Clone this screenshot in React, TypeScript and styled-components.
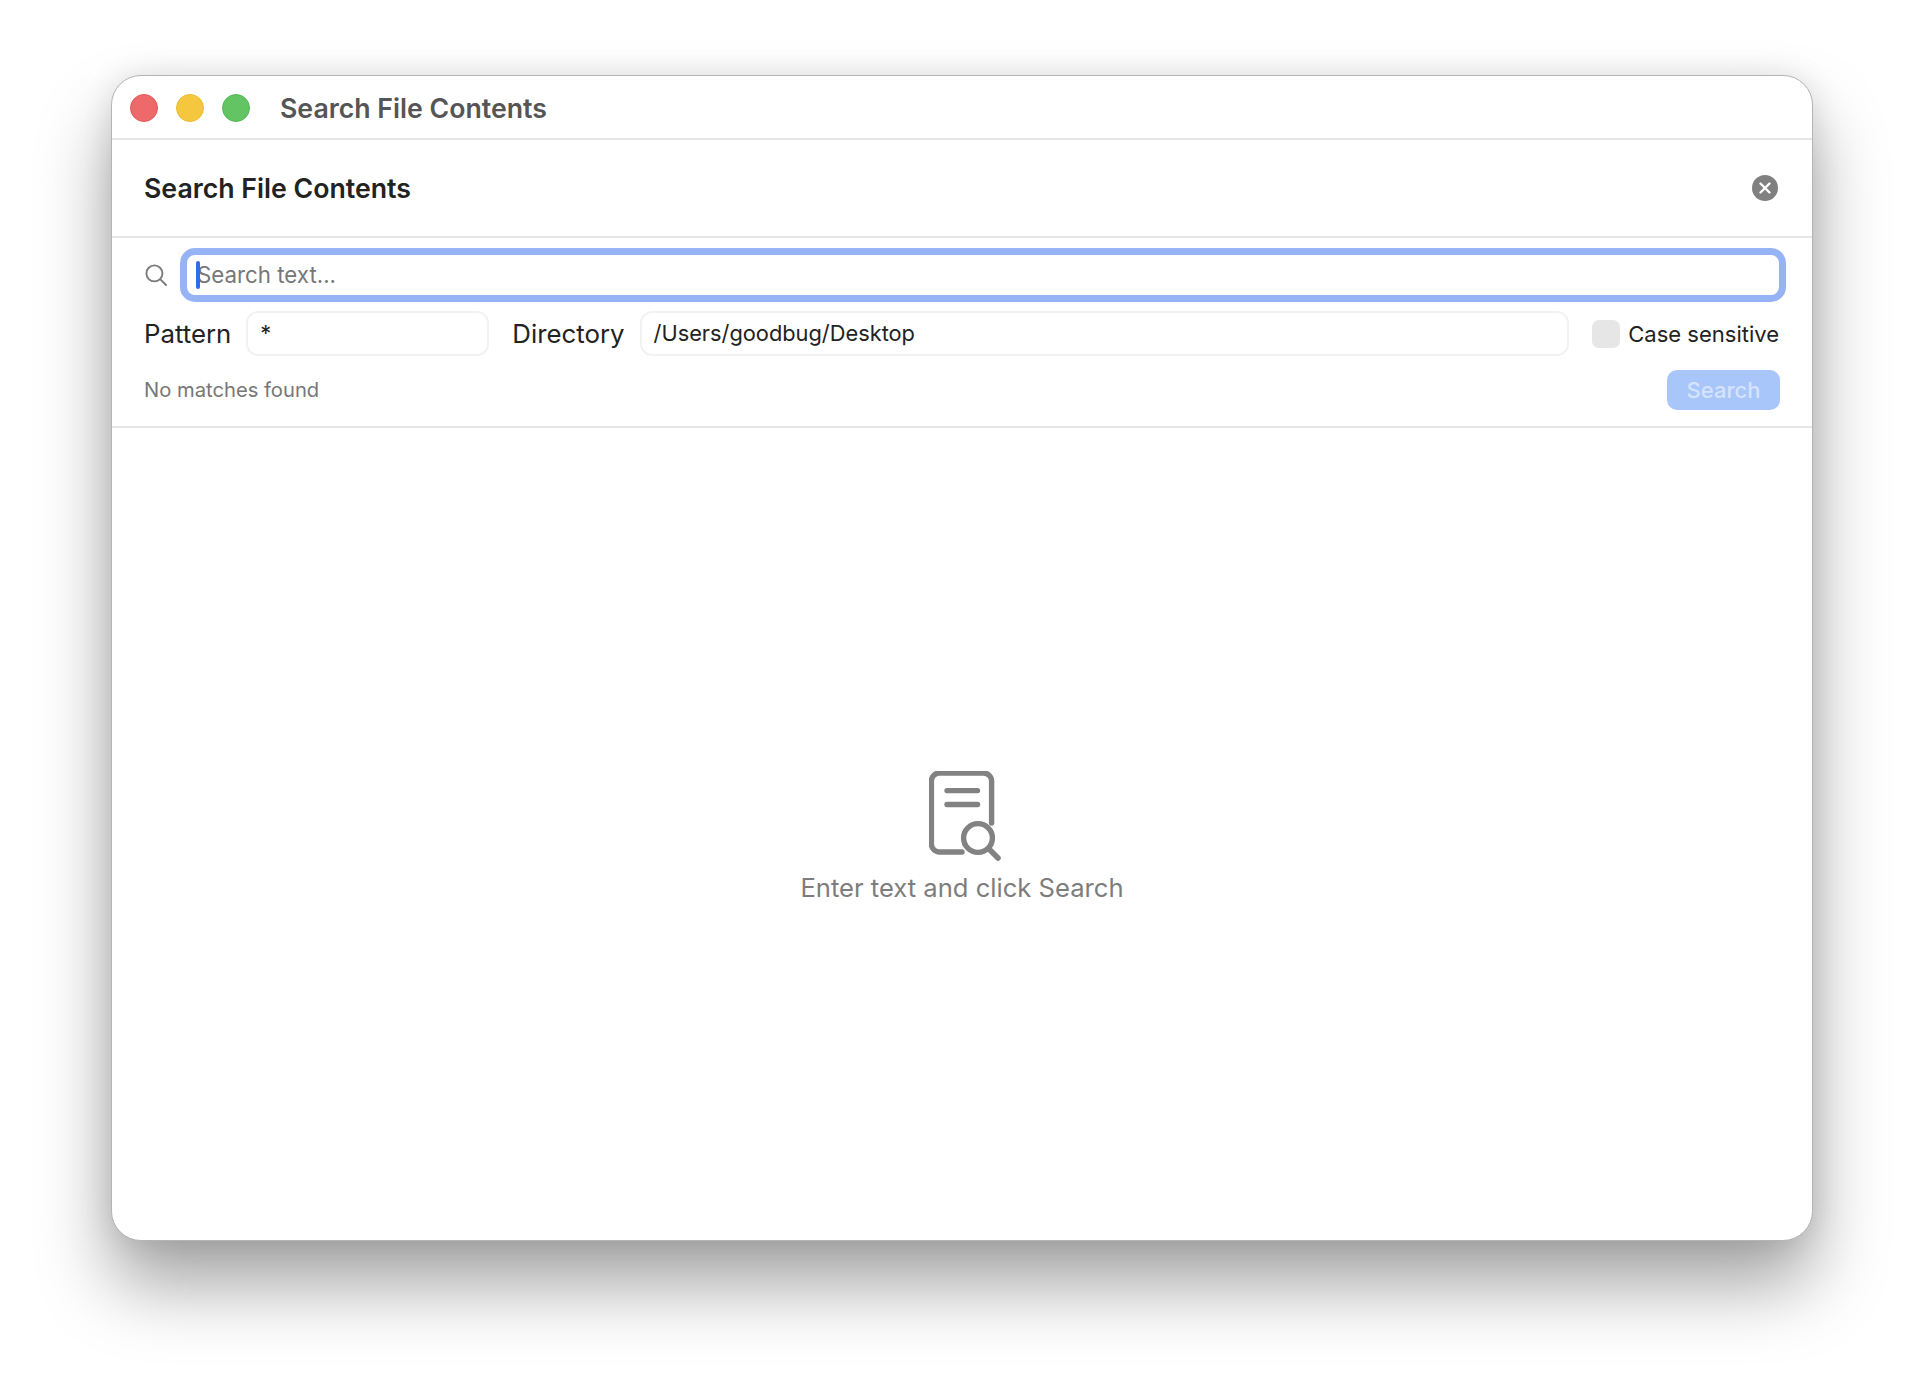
import React from 'react';
import styled, { createGlobalStyle } from 'styled-components';

const GlobalStyle = createGlobalStyle`
  html, body {
    margin: 0;
    background: #fff;
  }

  body {
    font-family: Inter, "Liberation Sans", sans-serif;
    color: #222;
  }
`;

const Page = styled.div`
  width: 1924px;
  height: 1388px;
  box-sizing: border-box;
  padding: 75px 0 0 111px;
  overflow: hidden;
`;

const Window = styled.div`
  width: 1702px;
  height: 1166px;
  box-sizing: border-box;
  display: flex;
  flex-direction: column;
  background: #fff;
  border: 1px solid #b4b4b4;
  border-radius: 30px;
  box-shadow: 0 44px 72px rgba(0, 0, 0, 0.36), 0 0 30px rgba(0, 0, 0, 0.1);
`;

const TitleBar = styled.div`
  height: 60px;
  flex: none;
  display: flex;
  align-items: center;
  padding: 2px 0 0 18px;
  border-bottom: 2px solid #e6e6e6;
`;

const Light = styled.span<{ $color: string; $edge: string }>`
  width: 28px;
  height: 28px;
  box-sizing: border-box;
  margin-right: 18px;
  border-radius: 50%;
  background: ${(p) => p.$color};
  border: 1px solid ${(p) => p.$edge};
`;

const WindowTitle = styled.div`
  margin-left: 12px;
  font-size: 26.7px;
  font-weight: 600;
  color: #555;
`;

const Header = styled.div`
  height: 96px;
  flex: none;
  display: flex;
  align-items: center;
  justify-content: space-between;
  padding: 0 34px 0 32px;
  border-bottom: 2px solid #e6e6e6;
`;

const Heading = styled.div`
  font-size: 26.7px;
  font-weight: 600;
  color: #222;
`;

const SearchRow = styled.div`
  display: flex;
  align-items: center;
  gap: 13px;
  margin: 10px 26px 0 33px;
`;

const SearchField = styled.div`
  position: relative;
  flex: 1;
`;

const SearchInput = styled.input`
  display: block;
  width: 100%;
  height: 54px;
  box-sizing: border-box;
  padding: 0 0 2px 10px;
  border: 7px solid #96b3f5;
  border-radius: 15px;
  outline: none;
  font-family: inherit;
  font-size: 22.3px;
  color: #222;

  &::placeholder {
    color: #777;
    opacity: 1;
  }
`;

const Caret = styled.span`
  position: absolute;
  left: 16px;
  top: 13px;
  width: 4px;
  height: 28px;
  border-radius: 2px;
  background: #2f6bed;
`;

const OptionsRow = styled.div`
  display: flex;
  align-items: center;
  margin: 9px 33px 0 32px;
`;

const FieldLabel = styled.label`
  font-size: 25.8px;
  color: #222;
  margin-right: 15px;
`;

const TextInput = styled.input<{ $width?: number }>`
  width: ${(p) => (p.$width ? `${p.$width}px` : 'auto')};
  flex: ${(p) => (p.$width ? 'none' : '1')};
  min-width: 0;
  height: 45px;
  box-sizing: border-box;
  padding: 0 12px 2px;
  border: 2px solid #f2f2f2;
  border-radius: 12px;
  outline: none;
  font-family: inherit;
  font-size: 21.8px;
  color: #222;
  margin-right: 23px;
`;

const CheckLabel = styled.div`
  display: flex;
  flex: none;
  align-items: center;
  gap: 8px;
  font-size: 22px;
  color: #222;
`;

const CheckBox = styled.span`
  width: 28px;
  height: 28px;
  flex: none;
  border-radius: 7px;
  background: #e6e6e6;
`;

const StatusRow = styled.div`
  height: 72px;
  flex: none;
  box-sizing: border-box;
  display: flex;
  align-items: center;
  justify-content: space-between;
  padding: 0 32px 3px;
  border-bottom: 2px solid #e6e6e6;
`;

const StatusText = styled.div`
  font-size: 20.2px;
  color: #777;
`;

const SearchButton = styled.button`
  width: 113px;
  height: 40px;
  border: 0;
  border-radius: 10px;
  background: #a9c6fa;
  color: #d6e3fd;
  font-family: inherit;
  font-size: 22px;
  font-weight: 500;
`;

const EmptyState = styled.div`
  flex: 1;
  display: flex;
  flex-direction: column;
  align-items: center;
  padding-top: 343px;
  box-sizing: border-box;
`;

const EmptyText = styled.div`
  margin-top: 11px;
  font-size: 25.6px;
  color: #7d7d7d;
`;

const DocIconWrap = styled.div`
  display: flex;
  margin-left: 5px;
`;

function SearchIcon() {
  return (
    <svg width="22" height="22" viewBox="0 0 22 22" fill="none" stroke="#7c7c7c" strokeWidth="1.9" strokeLinecap="round">
      <circle cx="9.4" cy="9.4" r="8" />
      <path d="M15.4 15.4 21 21" />
    </svg>
  );
}

function CloseIcon() {
  return (
    <svg width="26" height="26" viewBox="0 0 26 26">
      <circle cx="13" cy="13" r="13" fill="#808080" />
      <path d="M8.5 8.5l9 9M17.5 8.5l-9 9" stroke="#fff" strokeWidth="2.4" strokeLinecap="round" />
    </svg>
  );
}

function DocSearchIcon() {
  return (
    <svg width="72" height="90" viewBox="0 0 72 90" fill="none" stroke="#828282" strokeWidth="5.4" strokeLinecap="round">
      <path d="M62.6 52V10a8 8 0 0 0-8-8H10.4a8 8 0 0 0-8 8v63a8 8 0 0 0 8 8H33" />
      <path d="M18 19.6h30.500M18 33.500h30.500" />
      <circle cx="49" cy="67" r="14.400" />
      <path d="M60 78l9 9" strokeWidth="5.600" />
    </svg>
  );
}

export default function App() {
  return (
    <>
      <GlobalStyle />
      <Page>
        <Window>
          <TitleBar>
            <Light $color="#ee6a6a" $edge="#e25656" />
            <Light $color="#f4c73f" $edge="#e9bb30" />
            <Light $color="#62c463" $edge="#55b957" />
            <WindowTitle>Search File Contents</WindowTitle>
          </TitleBar>
          <Header>
            <Heading>Search File Contents</Heading>
            <CloseIcon />
          </Header>
          <SearchRow>
            <SearchIcon />
            <SearchField>
              <SearchInput placeholder="Search text..." readOnly />
              <Caret />
            </SearchField>
          </SearchRow>
          <OptionsRow>
            <FieldLabel>Pattern</FieldLabel>
            <TextInput $width={243} defaultValue="*" />
            <FieldLabel>Directory</FieldLabel>
            <TextInput defaultValue="/Users/goodbug/Desktop" />
            <CheckLabel>
              <CheckBox />
              Case sensitive
            </CheckLabel>
          </OptionsRow>
          <StatusRow>
            <StatusText>No matches found</StatusText>
            <SearchButton disabled>Search</SearchButton>
          </StatusRow>
          <EmptyState>
            <DocIconWrap>
              <DocSearchIcon />
            </DocIconWrap>
            <EmptyText>Enter text and click Search</EmptyText>
          </EmptyState>
        </Window>
      </Page>
    </>
  );
}
